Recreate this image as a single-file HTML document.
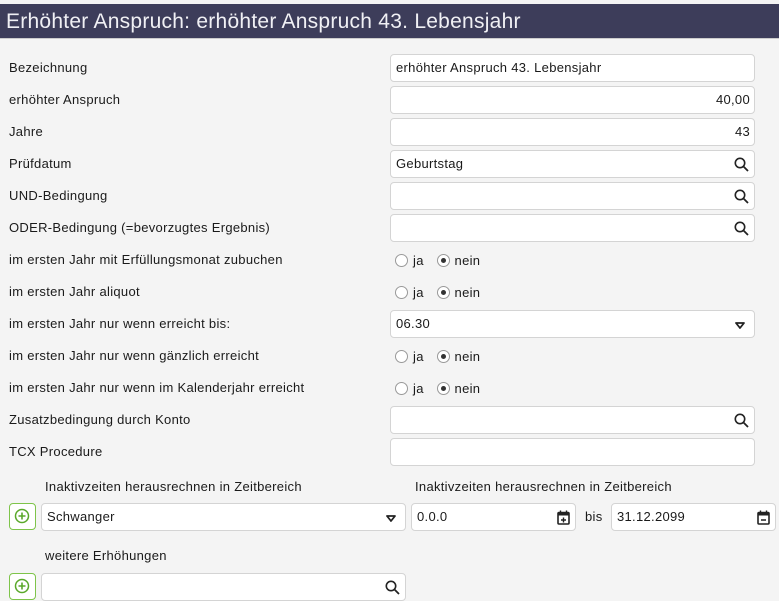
<!DOCTYPE html>
<html><head><meta charset="utf-8"><style>
*{box-sizing:border-box;margin:0;padding:0}
body{width:779px;height:600px;background:#f4f4f4;font-family:"Liberation Sans",sans-serif;font-size:13px;color:#1a1a1a;position:relative;overflow:hidden;letter-spacing:0.3px}
.hdr{position:absolute;left:0;top:4px;width:779px;height:35px;background:#3d3d5a;color:#f0f0f4;font-size:21px;line-height:35px;padding-left:6px;border-bottom:1px solid #ccc;letter-spacing:0.25px}
.lbl{position:absolute;left:9px;line-height:14px}
.inp{position:absolute;background:#fff;border:1px solid #d4d4d4;border-radius:4px;height:28px;line-height:26px;padding:0 5px;font-size:13px}
.r{text-align:right;padding-right:4px}
.ic{position:absolute;right:5px;top:6px}
.rad{position:absolute;left:395px;display:flex;align-items:center;gap:5px;font-size:13px}
.c{width:13px;height:13px;border:1px solid #999;border-radius:50%;display:inline-block;position:relative;background:#fff}
.c.on::after{content:"";position:absolute;left:3px;top:3px;width:5px;height:5px;border-radius:50%;background:#333}
.plus{position:absolute;left:9px;width:27px;height:27px;border:1.5px solid #7ec44a;border-radius:4px;background:#fff}
.tri{position:absolute;right:9px;top:11px}
</style></head><body>
<div class="hdr">Erhöhter Anspruch: erhöhter Anspruch 43. Lebensjahr</div>

<div class="lbl" style="top:61px">Bezeichnung</div>
<div class="inp" style="left:390px;top:54px;width:365px">erhöhter Anspruch 43. Lebensjahr</div>
<div class="lbl" style="top:93px">erhöhter Anspruch</div>
<div class="inp r" style="left:390px;top:86px;width:365px">40,00</div>
<div class="lbl" style="top:125px">Jahre</div>
<div class="inp r" style="left:390px;top:118px;width:365px">43</div>
<div class="lbl" style="top:157px">Prüfdatum</div>
<div class="inp" style="left:390px;top:150px;width:365px">Geburtstag<svg class="ic" width="15" height="15" viewBox="0 0 15 15"><circle cx="6" cy="6" r="4.7" fill="none" stroke="#222" stroke-width="1.6"/><path d="M9.5 9.5L14 14" stroke="#222" stroke-width="1.8"/></svg></div>
<div class="lbl" style="top:189px">UND-Bedingung</div>
<div class="inp" style="left:390px;top:182px;width:365px"><svg class="ic" width="15" height="15" viewBox="0 0 15 15"><circle cx="6" cy="6" r="4.7" fill="none" stroke="#222" stroke-width="1.6"/><path d="M9.5 9.5L14 14" stroke="#222" stroke-width="1.8"/></svg></div>
<div class="lbl" style="top:221px">ODER-Bedingung (=bevorzugtes Ergebnis)</div>
<div class="inp" style="left:390px;top:214px;width:365px"><svg class="ic" width="15" height="15" viewBox="0 0 15 15"><circle cx="6" cy="6" r="4.7" fill="none" stroke="#222" stroke-width="1.6"/><path d="M9.5 9.5L14 14" stroke="#222" stroke-width="1.8"/></svg></div>
<div class="lbl" style="top:253px">im ersten Jahr mit Erfüllungsmonat zubuchen</div>
<div class="rad" style="top:253px"><span class="c"></span>ja&nbsp;&nbsp;<span class="c on"></span>nein</div>
<div class="lbl" style="top:285px">im ersten Jahr aliquot</div>
<div class="rad" style="top:285px"><span class="c"></span>ja&nbsp;&nbsp;<span class="c on"></span>nein</div>
<div class="lbl" style="top:317px">im ersten Jahr nur wenn erreicht bis:</div>
<div class="inp" style="left:390px;top:310px;width:365px">06.30<svg class="tri" width="10" height="7" viewBox="0 0 10 7"><path d="M1 1h8L5 6z" fill="none" stroke="#222" stroke-width="1.8" stroke-linejoin="round"/></svg></div>
<div class="lbl" style="top:349px">im ersten Jahr nur wenn gänzlich erreicht</div>
<div class="rad" style="top:349px"><span class="c"></span>ja&nbsp;&nbsp;<span class="c on"></span>nein</div>
<div class="lbl" style="top:381px">im ersten Jahr nur wenn im Kalenderjahr erreicht</div>
<div class="rad" style="top:381px"><span class="c"></span>ja&nbsp;&nbsp;<span class="c on"></span>nein</div>
<div class="lbl" style="top:413px">Zusatzbedingung durch Konto</div>
<div class="inp" style="left:390px;top:406px;width:365px"><svg class="ic" width="15" height="15" viewBox="0 0 15 15"><circle cx="6" cy="6" r="4.7" fill="none" stroke="#222" stroke-width="1.6"/><path d="M9.5 9.5L14 14" stroke="#222" stroke-width="1.8"/></svg></div>
<div class="lbl" style="top:445px">TCX Procedure</div>
<div class="inp" style="left:390px;top:438px;width:365px"></div>

<div class="lbl" style="left:45px;top:480px">Inaktivzeiten herausrechnen in Zeitbereich</div>
<div class="lbl" style="left:415px;top:480px">Inaktivzeiten herausrechnen in Zeitbereich</div>
<div class="plus" style="top:503px"><svg width="24" height="24" viewBox="0 0 24 24"><circle cx="12" cy="12" r="6.5" fill="none" stroke="#5aa82a" stroke-width="1.5"/><path d="M12 8.5v7M8.5 12h7" stroke="#5aa82a" stroke-width="1.6"/></svg></div>
<div class="inp" style="left:41px;top:503px;width:365px">Schwanger<svg class="tri" width="10" height="7" viewBox="0 0 10 7"><path d="M1 1h8L5 6z" fill="none" stroke="#222" stroke-width="1.8" stroke-linejoin="round"/></svg></div>
<div class="inp" style="left:411px;top:503px;width:165px">0.0.0<svg class="ic" width="13" height="15" viewBox="0 0 13 15"><rect x="1" y="2.5" width="11" height="11.5" rx="1" fill="none" stroke="#222" stroke-width="1.6"/><rect x="1" y="2.5" width="11" height="3" fill="#222"/><path d="M3.5 0.5v3M9.5 0.5v3M6.5 7.5v5M4 10h5" stroke="#222" stroke-width="1.4"/></svg></div>
<div class="lbl" style="left:585px;top:510px">bis</div>
<div class="inp" style="left:611px;top:503px;width:165px">31.12.2099<svg class="ic" width="13" height="15" viewBox="0 0 13 15"><rect x="1" y="2.5" width="11" height="11.5" rx="1" fill="none" stroke="#222" stroke-width="1.6"/><rect x="1" y="2.5" width="11" height="3" fill="#222"/><path d="M3.5 0.5v3M9.5 0.5v3M4 10h5" stroke="#222" stroke-width="1.4"/></svg></div>

<div class="lbl" style="left:45px;top:549px">weitere Erhöhungen</div>
<div class="plus" style="top:573px"><svg width="24" height="24" viewBox="0 0 24 24"><circle cx="12" cy="12" r="6.5" fill="none" stroke="#5aa82a" stroke-width="1.5"/><path d="M12 8.5v7M8.5 12h7" stroke="#5aa82a" stroke-width="1.6"/></svg></div>
<div class="inp" style="left:41px;top:573px;width:365px"><svg class="ic" width="15" height="15" viewBox="0 0 15 15"><circle cx="6" cy="6" r="4.7" fill="none" stroke="#222" stroke-width="1.6"/><path d="M9.5 9.5L14 14" stroke="#222" stroke-width="1.8"/></svg></div>
</body></html>
